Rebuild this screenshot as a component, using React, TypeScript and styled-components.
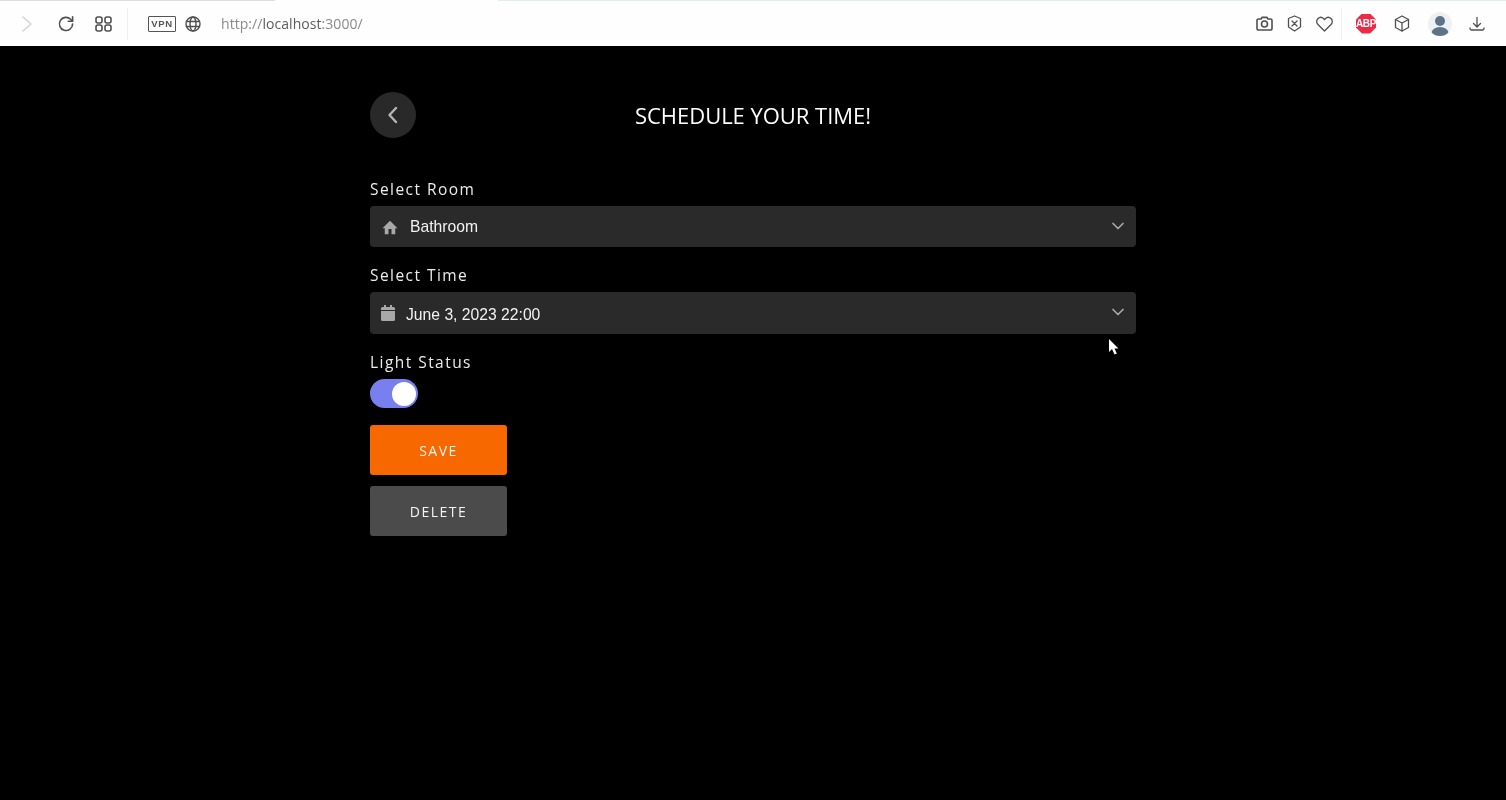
import React from "react";
import styled, { createGlobalStyle } from "styled-components";

const Global = createGlobalStyle`
  html, body { margin: 0; padding: 0; background: #000; }
  body { font-family: "Open Sans", "Noto Sans", "Liberation Sans", sans-serif; overflow: hidden; }
`;

const Screen = styled.div`
  position: relative;
  width: 1506px;
  height: 800px;
  background: #000;
  overflow: hidden;
  filter: blur(0.4px);
`;

const Toolbar = styled.header`
  position: relative;
  display: flex;
  align-items: center;
  justify-content: space-between;
  height: 46px;
  box-sizing: border-box;
  padding-top: 1px;
  background: #fefefe;

  &::before {
    content: "";
    position: absolute;
    inset: 0 0 auto 0;
    height: 1px;
    background: linear-gradient(90deg, #dedede 275px, #fff 275px, #fff 498px, #e4ecf0 498px);
  }
`;

const ToolGroup = styled.div`
  display: flex;
  align-items: center;
`;

const IconSlot = styled.span<{ $w: number; $ml?: number; $mr?: number; $faint?: boolean }>`
  display: flex;
  align-items: center;
  justify-content: center;
  width: ${(p) => p.$w}px;
  margin-left: ${(p) => p.$ml ?? 0}px;
  margin-right: ${(p) => p.$mr ?? 0}px;
  color: ${(p) => (p.$faint ? "#d4d4d4" : "#505050")};
`;

const Divider = styled.span<{ $ml: number }>`
  width: 1px;
  height: 32px;
  margin-left: ${(p) => p.$ml}px;
  background: #f0f0f0;
`;

const VpnBadge = styled.span`
  display: flex;
  align-items: center;
  justify-content: center;
  box-sizing: border-box;
  width: 28px;
  height: 16px;
  margin-left: 20px;
  border: 1px solid #555;
  border-radius: 1px;
  font-family: "Liberation Sans", sans-serif;
  font-size: 9.5px;
  font-weight: 700;
  letter-spacing: 0.6px;
  color: #555;
`;

const Url = styled.span`
  margin-left: 19px;
  font-size: 14px;
  color: #8a8a8a;
  letter-spacing: 0.05px;
`;

const UrlHost = styled.span`
  color: #5d5d5d;
`;

const Abp = styled.span`
  display: flex;
  align-items: center;
  justify-content: center;
  width: 20px;
  height: 20px;
  margin-left: 14px;
  background: #ee2b47;
  clip-path: polygon(30% 0, 70% 0, 100% 30%, 100% 70%, 70% 100%, 30% 100%, 0 70%, 0 30%);
  font-family: "Liberation Sans", sans-serif;
  font-size: 10px;
  font-weight: 700;
  letter-spacing: -0.3px;
  color: #fff;
`;

const Avatar = styled.span`
  display: flex;
  align-items: center;
  justify-content: center;
  width: 24px;
  height: 24px;
  margin-left: 18px;
  border-radius: 50%;
  background: #eef0f4;
  overflow: hidden;
`;

const Main = styled.main`
  display: flex;
  flex-direction: column;
  width: 766px;
  margin: 0 auto;
  padding-top: 46px;
`;

const Header = styled.div`
  position: relative;
  display: flex;
  align-items: center;
  justify-content: center;
  height: 46px;
  margin-bottom: 41px;
`;

const BackButton = styled.button`
  position: absolute;
  left: 0;
  top: 0;
  display: flex;
  align-items: center;
  justify-content: center;
  width: 46px;
  height: 46px;
  padding: 0;
  border: 0;
  border-radius: 50%;
  background: #292929;
  color: #b5b5b5;
`;

const Title = styled.h1`
  margin: 0;
  font-size: 22px;
  font-weight: 400;
  letter-spacing: -0.03px;
  color: #fff;
`;

const Label = styled.label`
  display: block;
  height: 21px;
  font-size: 15.5px;
  line-height: 21px;
  letter-spacing: 1.45px;
  color: #ececec;
`;

const Field = styled.div`
  margin-bottom: 18px;
`;

const Select = styled.div<{ $h: number }>`
  display: flex;
  align-items: center;
  gap: 11px;
  box-sizing: border-box;
  height: ${(p) => p.$h}px;
  margin-top: 6px;
  padding: 0 12px 0 11px;
  border-radius: 4px;
  background: #2a2a2a;
  color: #fff;
`;

const SelectText = styled.span<{ $dy: number }>`
  flex: 1;
  padding-top: ${(p) => p.$dy}px;
  font-family: "Liberation Sans", sans-serif;
  font-size: 15.7px;
  color: #f2f2f2;
`;

const Caret = styled.span`
  display: flex;
  margin-bottom: 2px;
`;

const ToggleTrack = styled.div`
  position: relative;
  width: 48px;
  height: 29px;
  margin-top: 6px;
  border-radius: 15px;
  background: #7880f0;
`;

const ToggleKnob = styled.span`
  position: absolute;
  top: 3px;
  right: 2px;
  width: 24px;
  height: 24px;
  border-radius: 50%;
  background: #fff;
`;

const Action = styled.button<{ $bg: string; $mt: number }>`
  display: block;
  box-sizing: border-box;
  width: 137px;
  height: 50px;
  margin-top: ${(p) => p.$mt}px;
  padding: 0;
  border: 0;
  border-radius: 3px;
  background: ${(p) => p.$bg};
  font-family: inherit;
  font-size: 14px;
  letter-spacing: 1.5px;
  color: #f4f4f4;
`;

const Cursor = styled.svg`
  position: absolute;
  left: 1108px;
  top: 338px;
`;

const stroke = { fill: "none", stroke: "currentColor", strokeWidth: 1.6, strokeLinecap: "round" as const, strokeLinejoin: "round" as const };

const CaretIcon = () => (
  <Caret>
    <svg width="12" height="8" viewBox="0 0 12 8" fill="none" stroke="#a8a8a8" strokeWidth="1.700" strokeLinecap="round" strokeLinejoin="round"><path d="M1 1.500L6 6.500l5-5" /></svg>
  </Caret>
);

export default function App() {
  return (
    <Screen>
      <Global />
      <Toolbar>
        <ToolGroup>
          <IconSlot $w={16} $ml={19} $faint>
            <svg width="14" height="18" viewBox="0 0 14 18" {...stroke}><path d="M3 2l8 7-8 7" /></svg>
          </IconSlot>
          <IconSlot $w={20} $ml={21}>
            <svg width="18" height="18" viewBox="0 0 18 18" {...stroke}><path d="M15.600 9a6.600 6.600 0 1 1-1.900-4.700L15.500 6" /><path d="M15.600 1.800v4.400h-4.300" /></svg>
          </IconSlot>
          <IconSlot $w={18} $ml={18}>
            <svg width="17" height="16" viewBox="0 0 17 16" {...stroke}><rect x="1" y="1" width="6" height="6" rx="2" /><rect x="10" y="1" width="6" height="6" rx="2" /><rect x="1" y="9" width="6" height="6" rx="2" /><rect x="10" y="9" width="6" height="6" rx="2" /></svg>
          </IconSlot>
          <Divider $ml={15} />
          <VpnBadge>VPN</VpnBadge>
          <IconSlot $w={18} $ml={8}>
            <svg width="16" height="16" viewBox="0 0 16 16" {...stroke} strokeWidth={1.4}><circle cx="8" cy="8" r="7" /><ellipse cx="8" cy="8" rx="3" ry="7" /><path d="M1.500 5.500h13M1.500 10.500h13" /></svg>
          </IconSlot>
          <Url>http://<UrlHost>localhost</UrlHost>:3000/</Url>
        </ToolGroup>
        <ToolGroup>
          <IconSlot $w={18}>
            <svg width="17" height="15" viewBox="0 0 17 15" {...stroke}><path d="M2.500 3H5l1-1.600h5L12 3h2.500A1.500 1.500 0 0 1 16 4.500v8a1.500 1.500 0 0 1-1.500 1.500h-12A1.500 1.500 0 0 1 1 12.500v-8A1.500 1.500 0 0 1 2.500 3z" /><circle cx="8.500" cy="8" r="3" /></svg>
          </IconSlot>
          <IconSlot $w={16} $ml={13}>
            <svg width="15" height="17" viewBox="0 0 15 17" {...stroke} strokeWidth={1.3}><path d="M7.500 1l6 2.500v8.500l-6 4-6-4V3.500z" /><path d="M5 6l5 5M10 6l-5 5" /></svg>
          </IconSlot>
          <IconSlot $w={18} $ml={13}>
            <svg width="17" height="16" viewBox="0 0 17 16" {...stroke} strokeWidth={1.3}><path d="M8.500 15L2 8.500a4.100 4.100 0 0 1 0-6 4 4 0 0 1 5.500 0l1 1.200 1-1.200a4 4 0 0 1 5.500 0 4.100 4.100 0 0 1 0 6z" /></svg>
          </IconSlot>
          <Divider $ml={8} />
          <Abp>ABP</Abp>
          <IconSlot $w={16} $ml={18}>
            <svg width="16" height="17" viewBox="0 0 16 17" {...stroke} strokeWidth={1.3}><path d="M8 1l6.500 3.500v8L8 16l-6.500-3.500v-8z" /><path d="M1.500 4.500L8 8l6.500-3.500M8 8v8" /></svg>
          </IconSlot>
          <Avatar>
            <svg width="24" height="24" viewBox="0 0 24 24"><circle cx="12" cy="9" r="5" fill="#5d7389" /><ellipse cx="12" cy="21" rx="8.500" ry="6" fill="#5d7389" /></svg>
          </Avatar>
          <IconSlot $w={16} $ml={17} $mr={21}>
            <svg width="16" height="16" viewBox="0 0 16 16" {...stroke} strokeWidth={1.3}><path d="M8 1.500v9M4.500 7.500L8 11l3.500-3.500M1 12v.5a1.500 1.500 0 0 0 1.500 1.500h11a1.500 1.500 0 0 0 1.500-1.500V12" /></svg>
          </IconSlot>
        </ToolGroup>
      </Toolbar>
      <Main>
        <Header>
          <BackButton aria-label="Back">
            <svg width="16" height="20" viewBox="0 0 16 20" fill="none" stroke="currentColor" strokeWidth="2.400" strokeLinecap="round" strokeLinejoin="round"><path d="M11 3L4.500 10l6.500 7" /></svg>
          </BackButton>
          <Title>SCHEDULE YOUR TIME!</Title>
        </Header>
        <Field>
          <Label>Select Room</Label>
          <Select $h={41}>
            <svg width="18" height="16" viewBox="0 0 24 21" fill="#a8a8a8"><path d="M10 20v-7h4v7h5v-8h3L12 2 2 12h3v8z" /></svg>
            <SelectText $dy={1}>Bathroom</SelectText>
            <CaretIcon />
          </Select>
        </Field>
        <Field>
          <Label>Select Time</Label>
          <Select $h={42}>
            <svg width="14" height="16" viewBox="0 0 14 16" fill="#a8a8a8"><path d="M3 0h2v2h4V0h2v2h1.500A1.500 1.500 0 0 1 14 3.500V5H0V3.500A1.500 1.500 0 0 1 1.500 2H3zM0 6h14v8.500a1.500 1.500 0 0 1-1.500 1.500h-11A1.500 1.500 0 0 1 0 14.500z" /></svg>
            <SelectText $dy={3}>June 3, 2023 22:00</SelectText>
            <CaretIcon />
          </Select>
        </Field>
        <Label>Light Status</Label>
        <ToggleTrack><ToggleKnob /></ToggleTrack>
        <Action $bg="#f76800" $mt={17}>SAVE</Action>
        <Action $bg="#4b4b4b" $mt={11}>DELETE</Action>
      </Main>
      <Cursor width="12" height="18" viewBox="0 0 12 18"><path d="M1 1v13l3-3 2.500 5.500 2.300-1L6.500 10.500H10.500z" fill="#fff" /></Cursor>
    </Screen>
  );
}
